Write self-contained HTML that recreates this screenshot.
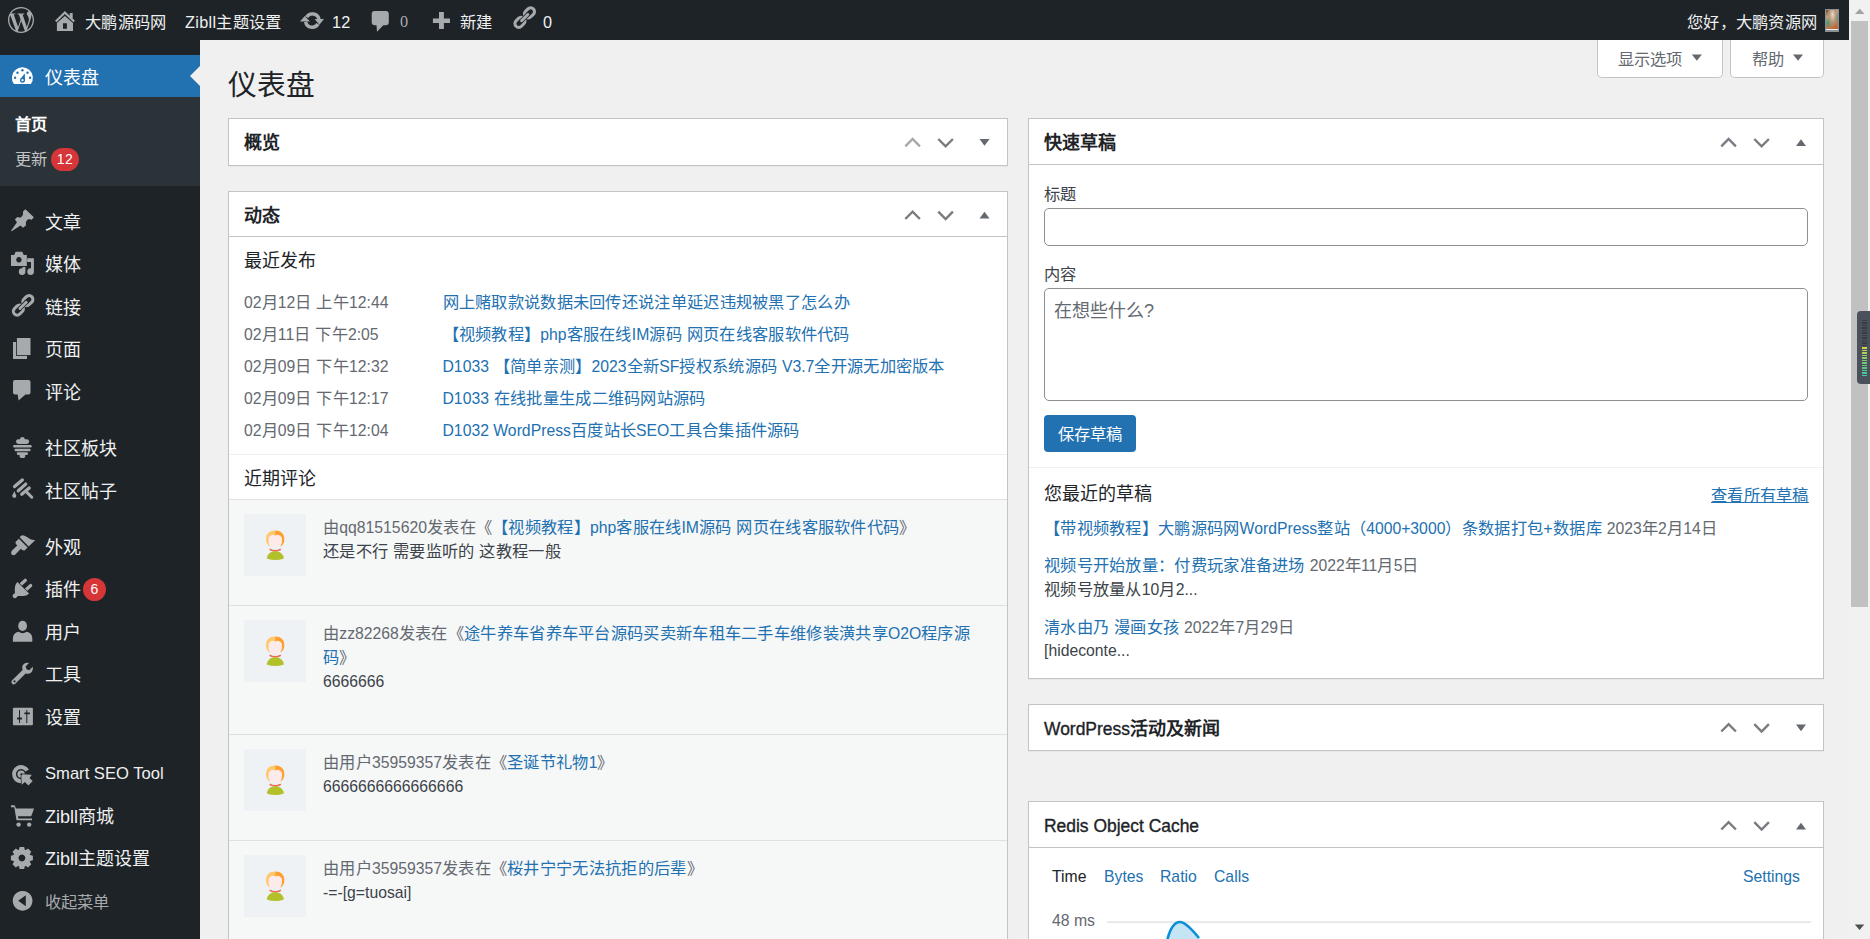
<!DOCTYPE html>
<html lang="zh-CN">
<head>
<meta charset="utf-8">
<style>
*{box-sizing:border-box;margin:0;padding:0}
html,body{width:1870px;height:939px;overflow:hidden;background:#f0f0f1}
body{font-family:"Liberation Sans",sans-serif;color:#3c434a;position:relative;text-spacing-trim:space-all}
.abs{position:absolute}
a{color:#2271b1;text-decoration:none}
svg{display:block}
/* admin bar */
#wpadminbar{position:absolute;left:0;top:0;width:1849px;height:40px;background:#1d2327;color:#f0f0f1;font-size:16.25px}
#wpadminbar .t{position:absolute;top:2px;line-height:40px;white-space:nowrap;letter-spacing:0.3px}
#wpadminbar .ic{position:absolute;fill:#a7aaad}
/* menu */
#adminmenuback{position:absolute;left:0;top:40px;width:200px;height:899px;background:#1d2327}
.mi{position:absolute;left:0;width:200px;height:42.5px;color:#f0f0f1;font-size:18px}
.mi .lb{position:absolute;left:45px;top:2px;line-height:42.5px;white-space:nowrap}
.mi svg{position:absolute;fill:#a7aaad}
.sub{font-size:16.25px;line-height:24px;white-space:nowrap;letter-spacing:0.4px}
.badge{display:inline-block;background:#d63638;color:#fff;border-radius:11.5px;font-size:14px;min-width:23px;height:23px;line-height:23px;padding:0 6px;text-align:center;vertical-align:middle;margin-left:-2px}
/* content */
h1{position:absolute;left:228px;top:65px;font-size:28.75px;font-weight:400;color:#1d2327;line-height:40px}
.tab{position:absolute;top:40px;height:38px;background:#fff;border:1px solid #c3c4c7;border-top:none;border-radius:0 0 5px 5px;color:#646970;font-size:16.25px;line-height:36px}
.postbox{position:absolute;background:#fff;border:1px solid #c3c4c7;box-shadow:0 1px 1px rgba(0,0,0,.04)}
.hdr{position:relative;height:46px;border-bottom:1px solid #c3c4c7}
.closed .hdr{border-bottom:none;height:45px}
.hdr h2{position:absolute;left:15px;top:1px;line-height:46px;font-size:18px;font-weight:700;color:#1d2327;white-space:nowrap}
.hdr .ctl{position:absolute;right:0;top:0;height:46px;width:110px}
.hdr svg{position:absolute}
.t175{font-size:18px;line-height:24px;white-space:nowrap}
.t1625{font-size:16.25px;letter-spacing:0.3px;line-height:24px;white-space:nowrap}
.rows .row{height:32px;line-height:24px;font-size:16.25px;letter-spacing:0.3px;white-space:nowrap;position:relative}
.rows .d{color:#646970;display:inline-block;width:198.5px}
.cm{left:0;width:778px;background:#f6f7f7;border-top:1px solid #e0e0e0}
.av{position:absolute;left:15px;width:62px;height:62px;background:#eef2f5}
.ct{position:absolute;left:94px;width:660px;font-size:16.25px;letter-spacing:0.3px;line-height:24px;color:#3c434a}
.ct .by{color:#646970}
.inp{border:1px solid #8c8f94;border-radius:5px;background:#fff}
.btn{background:#2271b1;color:#fff;border-radius:4px;font-size:16.25px;line-height:39px;text-align:center}
.L{font-size:0.97em;line-height:1;letter-spacing:0}
</style>
</head>
<body>
<!-- ADMIN BAR -->
<div id="wpadminbar">
  <svg class="ic" style="left:8px;top:7px" width="26" height="26" viewBox="0 0 24 24"><path d="M21.469 6.825c.84 1.537 1.318 3.3 1.318 5.175 0 3.979-2.156 7.456-5.363 9.325l3.295-9.527c.615-1.54.82-2.771.82-3.864 0-.405-.026-.78-.07-1.11m-7.981.105c.647-.03 1.232-.105 1.232-.105.582-.075.514-.93-.067-.899 0 0-1.755.135-2.88.135-1.064 0-2.85-.15-2.85-.15-.585-.03-.661.855-.075.885 0 0 .54.061 1.125.09l1.68 4.605-2.37 7.08L5.354 6.9c.649-.03 1.234-.1 1.234-.1.585-.075.516-.93-.065-.896 0 0-1.746.138-2.874.138-.2 0-.438-.008-.69-.015C4.911 3.15 8.235 1.215 12 1.215c2.809 0 5.365 1.072 7.286 2.833-.046-.003-.091-.009-.141-.009-1.06 0-1.812.923-1.812 1.914 0 .89.513 1.643 1.06 2.531.411.72.89 1.643.89 2.977 0 .915-.354 1.994-.821 3.479l-1.075 3.585-3.9-11.61zM12 22.784c-1.059 0-2.081-.153-3.048-.437l3.237-9.406 3.315 9.087q.036.078.078.149c-1.12.393-2.325.609-3.582.609M1.211 12c0-1.564.336-3.05.935-4.39L7.29 21.709A10.79 10.79 0 0 1 1.211 12M12 0C5.385 0 0 5.385 0 12s5.385 12 12 12 12-5.385 12-12S18.615 0 12 0"/></svg>
  <svg class="ic" style="left:50px;top:5px" width="30" height="30" viewBox="50 5 30 30"><path d="M55 20.7L64.9 10.9L69.8 15.7V13H72.7V18.6L74.9 20.7L73.4 22.3L64.9 14L56.5 22.3Z"/><path fill-rule="evenodd" d="M56.9 31V23L64.9 15.9L73 23V31ZM63 23.2V28.8H66.9V23.2Z"/></svg>
  <span class="t" style="left:85px">大鹏源码网</span>
  <span class="t" style="left:185px">Zibll主题设置</span>
  <svg class="ic" style="left:300px;top:11px" width="24" height="20" viewBox="0 0 24 20"><path d="M6.6 6.2A6.75 6.75 0 0 1 19.05 8.4" fill="none" stroke="#a7aaad" stroke-width="3.4"/><path d="M14.6 8H24L19.4 13.8Z"/><path d="M18.0 13.0A6.75 6.75 0 0 1 5.6 10.8" fill="none" stroke="#a7aaad" stroke-width="3.4"/><path d="M0 10.6H10L4.7 5Z"/></svg>
  <span class="t" style="left:332px">12</span>
  <svg class="ic" style="left:365px;top:5px" width="30" height="30" viewBox="365 5 30 30"><path d="M374.7 11H385.8A3 3 0 0 1 388.8 14V22.2A3 3 0 0 1 385.8 25.2H383.3L377 31.7L376.5 25.2H374.7A3 3 0 0 1 371.7 22.2V14A3 3 0 0 1 374.7 11Z"/></svg>
  <span class="t" style="left:400px;color:#a7aaad;font-family:'Liberation Serif',serif">0</span>
  <svg class="ic" style="left:425px;top:5px" width="30" height="30" viewBox="425 5 30 30"><path d="M439 12H443.9V18.5H450V23H443.9V29H439V23H432.9V18.5H439Z"/></svg>
  <span class="t" style="left:460px">新建</span>
  <svg class="ic" style="left:505px;top:2px" width="40" height="32" viewBox="505 2 40 32"><g transform="translate(524.7 17.6) rotate(-45) scale(0.97)"><rect x="-12.65" y="-3.95" width="11.5" height="7.9" rx="3.95" fill="none" stroke="#a7aaad" stroke-width="3.1"/><rect x="1.15" y="-3.95" width="11.5" height="7.9" rx="3.95" fill="none" stroke="#a7aaad" stroke-width="3.1"/><rect x="-6.9" y="-2.3" width="13.8" height="4.6" rx="2.3" fill="#1d2327"/><rect x="-6.1" y="-1.5" width="12.2" height="3" rx="1.5" fill="#a7aaad"/></g></svg>
  <span class="t" style="left:543px">0</span>
  <span class="t" style="left:1687px">您好，大鹏资源网</span>
  <div class="abs" style="left:1825px;top:9px;width:14px;height:23px;background:#8a8f94;padding:1px">
    <div style="width:12px;height:18.5px;background:radial-gradient(ellipse at 55% 25%,#e8d8c8 0%,#b89878 35%,transparent 60%),linear-gradient(150deg,#6b4a2e 0%,#c9a27a 30%,#4a9a84 50%,#b87a50 75%,#c25a28 100%)"></div><div style="width:12px;height:1.5px;background:#f0f0f0"></div>
  </div>
</div>

<!-- MENU -->
<div id="adminmenuback"></div>
<div id="menu">
  <div class="abs" style="left:0;top:55px;width:200px;height:42px;background:#2271b1"></div>
  <div class="abs" style="left:190px;top:66px;width:0;height:0;border-top:10px solid transparent;border-bottom:10px solid transparent;border-right:10px solid #f0f0f1"></div>
  <div class="abs" style="left:0;top:97px;width:200px;height:89px;background:#2c3338"></div>
  <div class="mi" style="top:55px;height:42px"><span class="lb" style="line-height:42px;color:#fff">仪表盘</span></div>
  <div class="abs sub" style="left:15px;top:112px;font-weight:700;color:#fff">首页</div>
  <div class="abs sub" style="left:15px;top:147px;color:#c3c4c7">更新 <span class="badge" style="position:relative;top:-1px">12</span></div>
  <div class="mi" style="top:199.75px"><span class="lb">文章</span></div>
  <div class="mi" style="top:242.25px"><span class="lb">媒体</span></div>
  <div class="mi" style="top:284.75px"><span class="lb">链接</span></div>
  <div class="mi" style="top:327.25px"><span class="lb">页面</span></div>
  <div class="mi" style="top:369.75px"><span class="lb">评论</span></div>
  <div class="mi" style="top:426px"><span class="lb">社区板块</span></div>
  <div class="mi" style="top:468.5px"><span class="lb">社区帖子</span></div>
  <div class="mi" style="top:524.75px"><span class="lb">外观</span></div>
  <div class="mi" style="top:567.25px"><span class="lb">插件 <span class="badge" style="position:relative;top:-2px;margin-left:-3px">6</span></span></div>
  <div class="mi" style="top:609.75px"><span class="lb">用户</span></div>
  <div class="mi" style="top:652.25px"><span class="lb">工具</span></div>
  <div class="mi" style="top:694.75px"><span class="lb">设置</span></div>
  <div class="mi" style="top:751px"><span class="lb" style="font-size:16.6px">Smart SEO Tool</span></div>
  <div class="mi" style="top:793.5px"><span class="lb">Zibll商城</span></div>
  <div class="mi" style="top:836px"><span class="lb">Zibll主题设置</span></div>
  <div class="mi" style="top:880px;font-size:16.25px;color:#a7aaad"><span class="lb" style="line-height:42px;top:1px">收起菜单</span></div>
  <svg class="abs" style="left:0;top:0" width="200" height="939" viewBox="0 0 200 939" fill="#a7aaad">
    <!-- dashboard -->
    <path fill="#fff" d="M13.93 84A10.5 10.5 0 1 1 30.87 84Z"/>
    <g fill="#2271b1"><circle cx="22.4" cy="70.2" r="1.2"/><circle cx="17.5" cy="72.8" r="1.2"/><circle cx="27.5" cy="72.8" r="1.2"/><circle cx="15.1" cy="77.7" r="1.2"/><circle cx="30.1" cy="77.7" r="1.2"/><path d="M24.8 73.2L25 80.2L20.2 79.2Z"/><circle cx="22.5" cy="80.2" r="2.5"/></g>
    <circle fill="#fff" cx="22.5" cy="80.2" r="1.1"/>
    <!-- pin -->
    <path d="M11.0 230.8L17.0 222.2L14.87 219.6L17.27 217L20.14 217.8Q22.5 216.5 23.02 214.5L23.02 211.4L25.41 209.2L33.88 217.3L31.64 219.7L28.77 219.1Q26.5 220 25.89 222.3L25.89 225.5L23.02 227.7L20.5 225.6L11.6 231.2Z"/>
    <!-- media -->
    <path fill-rule="evenodd" d="M11 254.9H14.2L15.6 251.8H22.3L23.7 254.9H26.85V265.9H11ZM18.9 257.1A2.7 2.7 0 1 0 18.91 257.1Z"/>
    <path d="M27.2 258.2H33.9V271.6A3.3 3.3 0 1 1 31 268.4V262H27.2Z"/>
    <path d="M22.5 266.9H25.4V271.6A3.3 3.3 0 1 1 22.5 268.4Z"/>
    <!-- links -->
    <g transform="translate(23.1 305.35) rotate(-45) scale(0.97)"><rect x="-12.65" y="-3.95" width="11.5" height="7.9" rx="3.95" fill="none" stroke="#a7aaad" stroke-width="3.1"/><rect x="1.15" y="-3.95" width="11.5" height="7.9" rx="3.95" fill="none" stroke="#a7aaad" stroke-width="3.1"/><rect x="-6.9" y="-2.3" width="13.8" height="4.6" rx="2.3" fill="#1d2327"/><rect x="-6.1" y="-1.5" width="12.2" height="3" rx="1.5" fill="#a7aaad"/></g>
    <!-- pages -->
    <path d="M13 342H27V359H13Z"/>
    <path fill="#1d2327" d="M16.1 337.2H31.3V355.9H16.1Z"/>
    <path d="M16.9 338H30.5V355.1H16.9Z"/>
    <!-- comments -->
    <path d="M15 380H28.5A2 2 0 0 1 30.5 382V392.4A2 2 0 0 1 28.5 394.4H25.5L18.5 400.6L17.7 394.4H15A2 2 0 0 1 13 392.4V382A2 2 0 0 1 15 380Z"/>
    <!-- community blocks -->
    <g stroke="#a7aaad" stroke-linecap="round">
      <path d="M18.3 441.6H26.8" stroke-width="4.6"/>
      <path d="M14.3 446.2H30.5" stroke-width="2.4"/>
      <path d="M15.7 450H29.4" stroke-width="2.4"/>
      <path d="M18.2 453.7H26.6" stroke-width="2.8"/>
      <path d="M14.3 494.5L17.9 491" stroke-width="0"/>
    </g>
    <circle cx="22.4" cy="439.3" r="2.4"/><ellipse cx="22.4" cy="456" rx="2.9" ry="2.1"/>
    <!-- community posts -->
    <g stroke="#a7aaad" stroke-linecap="round" stroke-width="3.3">
      <path d="M14.6 486.6L22.3 479.9"/>
      <path d="M18.3 490.8L25.7 484.1"/>
      <path d="M21.7 494.3L29.2 488"/>
      <path d="M27.2 492.6L31.8 497.2" stroke-width="3"/>
    </g>
    <path d="M14.3 491L16.4 495.8A2.1 2.1 0 1 1 12.2 495.8Z"/>
    <!-- appearance -->
    <path d="M19.7 537.3Q20.8 535.3 22.7 535.2Q25.2 535.4 27.6 537.6Q30.6 540 35.2 540.3L28.6 546.5Z"/>
    <path d="M18.9 538.8L27.6 547.5L24.8 550.3Q23.4 550.9 22 549.7L20.8 548.7L15.4 554.5Q13.4 556.1 11.6 554.5Q10.3 552.6 12 550.6L17.3 545.4L16.1 544.3Q15 543 15.7 541.8Z"/>
    <!-- plugins -->
    <g stroke="#a7aaad" stroke-linecap="round" stroke-width="3.2"><path d="M20.2 585L25.4 580.3"/><path d="M25.5 590.2L30.7 585.5"/></g>
    <path d="M17.4 582L29.1 593.5Q26.8 596 23 596L17.9 596L16.2 597.7A2.2 2.2 0 0 1 13.1 594.6L14.9 592.9Q14.6 589 15 586.5Q15.6 583.5 17.4 582Z" stroke="#1d2327" stroke-width="1.3" paint-order="stroke"/>
    <!-- users -->
    <ellipse cx="22.6" cy="625.9" rx="4.4" ry="5.1"/>
    <path d="M12.9 641.7V638Q13.5 632.6 18.5 631.8Q22.6 634.5 26.7 631.8Q31.7 632.6 32.3 638V641.7Z"/>
    <!-- tools -->
    <path d="M11.9 680.6L22.6 670Q21 665 25.4 663.1Q27.6 662.4 29 663L25.6 666.5L26.6 669.2L29.3 670.2L32.7 666.8Q33.3 668.4 32.4 670.8Q30.5 675 25.6 673.4L15 684Q13.5 685 11.9 683.5Q10.9 682 11.9 680.6ZM14.5 680.2A1.1 1.1 0 1 0 14.51 680.2Z" fill-rule="evenodd"/>
    <!-- settings -->
    <path fill-rule="evenodd" d="M13.9 707.7H31.9A1 1 0 0 1 32.9 708.7V724.3A1 1 0 0 1 31.9 725.3H13.9A1 1 0 0 1 12.9 724.3V708.7A1 1 0 0 1 13.9 707.7ZM19 710V717.6H17.1V719.6H19V723H20V719.6H22V717.6H20V710ZM26.3 710V712.4H24.4V714.2H26.3V723H27.3V714.2H29.9V712.4H27.3V710Z"/>
    <!-- smart seo -->
    <path d="M27.25 770.55A7.1 7.1 0 1 0 23.53 780.77" fill="none" stroke="#a7aaad" stroke-width="3.9"/>
    <circle cx="21.1" cy="774.1" r="3.7"/>
    <path d="M21.3 774.2L21.7 784.8L24.9 782.1L28.4 785.4L32.7 781.1L29.5 777.9L31.8 774.7Z" stroke="#1d2327" stroke-width="1.3" paint-order="stroke"/>
    <circle cx="21.3" cy="774.3" r="0.9" fill="#1d2327"/>
    <!-- cart -->
    <path d="M11 805.3H14.6L16 808.6H34.1L31.2 816.3H18L18.3 818.4H32V820.3H16.5L14.3 807.3H11Z"/>
    <circle cx="18.6" cy="824.6" r="2.2"/><circle cx="29.2" cy="824.6" r="2.2"/>
    <!-- cog -->
    <path fill-rule="evenodd" d="M19.00 849.70 L19.60 847.00 L24.20 847.00 L24.80 849.70 L25.72 850.08 L28.05 848.60 L31.30 851.85 L29.82 854.18 L30.20 855.10 L32.90 855.70 L32.90 860.30 L30.20 860.90 L29.82 861.82 L31.30 864.15 L28.05 867.40 L25.72 865.92 L24.80 866.30 L24.20 869.00 L19.60 869.00 L19.00 866.30 L18.08 865.92 L15.75 867.40 L12.50 864.15 L13.98 861.82 L13.60 860.90 L10.90 860.30 L10.90 855.70 L13.60 855.10 L13.98 854.18 L12.50 851.85 L15.75 848.60 L18.08 850.08ZM21.9 854.6A3.4 3.4 0 1 0 21.91 854.6Z"/>
    <!-- collapse -->
    <path fill-rule="evenodd" d="M22.6 890.9A9.9 9.9 0 1 1 22.59 890.9ZM25.8 895.3V906.3L18.2 900.8Z"/>
  </svg>
</div>

<!-- CONTENT -->
<h1>仪表盘</h1>
<div class="tab" style="left:1597px;width:126px"><span class="abs" style="left:20px;top:1px">显示选项</span></div>
<div class="tab" style="left:1730px;width:94px"><span class="abs" style="left:21px;top:1px">帮助</span></div>

<!-- LEFT COLUMN -->
<div class="postbox closed" style="left:228px;top:118px;width:780px;height:48px">
  <div class="hdr"><h2>概览</h2></div>
</div>
<div class="postbox" style="left:228px;top:191px;width:780px;height:760px">
  <div class="hdr" style="height:45px"><h2>动态</h2></div>
  <div class="abs t175" style="left:15px;top:57px;color:#1d2327">最近发布</div>
  <div class="abs rows" style="left:15px;top:98px">
    <div class="row"><span class="d"><span class="L">02</span>月<span class="L">12</span>日 上午<span class="L">12:44</span></span><a>网上赌取款说数据未回传还说注单延迟违规被黑了怎么办</a></div>
    <div class="row"><span class="d"><span class="L">02</span>月<span class="L">11</span>日 下午<span class="L">2:05</span></span><a>【视频教程】<span class="L">php</span>客服在线<span class="L">IM</span>源码 网页在线客服软件代码</a></div>
    <div class="row"><span class="d"><span class="L">02</span>月<span class="L">09</span>日 下午<span class="L">12:32</span></span><a><span class="L">D1033</span> 【简单亲测】<span class="L">2023</span>全新<span class="L">SF</span>授权系统源码 <span class="L">V3.7</span>全开源无加密版本</a></div>
    <div class="row"><span class="d"><span class="L">02</span>月<span class="L">09</span>日 下午<span class="L">12:17</span></span><a><span class="L">D1033</span> 在线批量生成二维码网站源码</a></div>
    <div class="row"><span class="d"><span class="L">02</span>月<span class="L">09</span>日 下午<span class="L">12:04</span></span><a><span class="L">D1032 WordPress</span>百度站长<span class="L">SEO</span>工具合集插件源码</a></div>
  </div>
  <div class="abs" style="left:0;top:262px;width:778px;height:1px;background:#f0f0f1"></div>
  <div class="abs t175" style="left:15px;top:275px;color:#1d2327">近期评论</div>
    <div class="abs cm" style="top:307px;height:106px">
    <div class="av" style="top:14px"><svg width="62" height="62" viewBox="244 514 62 62"><path d="M270 548.6Q275.2 551.6 280.4 548.6L281.2 550Q275.2 553.6 269.2 550Z" fill="#f06b4f"/><path d="M266.8 558.6Q267.6 551.6 275.3 551.2Q283.1 551.6 283.9 558.6Q275.3 561.6 266.8 558.6Z" fill="#b2c12a"/><ellipse cx="275.2" cy="540.5" rx="7" ry="7.6" fill="#fdeaea"/><path d="M275.2 535.5Q271 533 268.5 538Q268 543 270 546.7Q265.6 544 266 538.2Q267 530.4 275.2 530.6Z" fill="#ffc86b"/><path d="M275.2 535.5Q279.4 533 282 538Q282.4 543 280.4 546.7Q284.8 544 284.3 538.2Q283.4 530.4 275.2 530.6Z" fill="#ff9f2e"/></svg></div>
    <div class="ct" style="top:15px"><span class="by">由<span class="L">qq81515620</span>发表在《<a>【视频教程】<span class="L">php</span>客服在线<span class="L">IM</span>源码 网页在线客服软件代码</a>》</span><br>还是不行 需要监听的 这教程一般</div>
  </div>
  <div class="abs cm" style="top:413px;height:129px">
    <div class="av" style="top:14px"><svg width="62" height="62" viewBox="244 514 62 62"><path d="M270 548.6Q275.2 551.6 280.4 548.6L281.2 550Q275.2 553.6 269.2 550Z" fill="#f06b4f"/><path d="M266.8 558.6Q267.6 551.6 275.3 551.2Q283.1 551.6 283.9 558.6Q275.3 561.6 266.8 558.6Z" fill="#b2c12a"/><ellipse cx="275.2" cy="540.5" rx="7" ry="7.6" fill="#fdeaea"/><path d="M275.2 535.5Q271 533 268.5 538Q268 543 270 546.7Q265.6 544 266 538.2Q267 530.4 275.2 530.6Z" fill="#ffc86b"/><path d="M275.2 535.5Q279.4 533 282 538Q282.4 543 280.4 546.7Q284.8 544 284.3 538.2Q283.4 530.4 275.2 530.6Z" fill="#ff9f2e"/></svg></div>
    <div class="ct" style="top:15px"><span class="by">由<span class="L">zz82268</span>发表在《<a>途牛养车省养车平台源码买卖新车租车二手车维修装潢共享<span class="L">O2O</span>程序源码</a>》</span><br><span class="L">6666666</span></div>
  </div>
  <div class="abs cm" style="top:542px;height:106px">
    <div class="av" style="top:14px"><svg width="62" height="62" viewBox="244 514 62 62"><path d="M270 548.6Q275.2 551.6 280.4 548.6L281.2 550Q275.2 553.6 269.2 550Z" fill="#f06b4f"/><path d="M266.8 558.6Q267.6 551.6 275.3 551.2Q283.1 551.6 283.9 558.6Q275.3 561.6 266.8 558.6Z" fill="#b2c12a"/><ellipse cx="275.2" cy="540.5" rx="7" ry="7.6" fill="#fdeaea"/><path d="M275.2 535.5Q271 533 268.5 538Q268 543 270 546.7Q265.6 544 266 538.2Q267 530.4 275.2 530.6Z" fill="#ffc86b"/><path d="M275.2 535.5Q279.4 533 282 538Q282.4 543 280.4 546.7Q284.8 544 284.3 538.2Q283.4 530.4 275.2 530.6Z" fill="#ff9f2e"/></svg></div>
    <div class="ct" style="top:15px"><span class="by">由用户<span class="L">35959357</span>发表在《<a>圣诞节礼物<span class="L">1</span></a>》</span><br><span class="L">6666666666666666</span></div>
  </div>
  <div class="abs cm" style="top:648px;height:300px">
    <div class="av" style="top:14px"><svg width="62" height="62" viewBox="244 514 62 62"><path d="M270 548.6Q275.2 551.6 280.4 548.6L281.2 550Q275.2 553.6 269.2 550Z" fill="#f06b4f"/><path d="M266.8 558.6Q267.6 551.6 275.3 551.2Q283.1 551.6 283.9 558.6Q275.3 561.6 266.8 558.6Z" fill="#b2c12a"/><ellipse cx="275.2" cy="540.5" rx="7" ry="7.6" fill="#fdeaea"/><path d="M275.2 535.5Q271 533 268.5 538Q268 543 270 546.7Q265.6 544 266 538.2Q267 530.4 275.2 530.6Z" fill="#ffc86b"/><path d="M275.2 535.5Q279.4 533 282 538Q282.4 543 280.4 546.7Q284.8 544 284.3 538.2Q283.4 530.4 275.2 530.6Z" fill="#ff9f2e"/></svg></div>
    <div class="ct" style="top:15px"><span class="by">由用户<span class="L">35959357</span>发表在《<a>桜井宁宁无法抗拒的后辈</a>》</span><br><span class="L">-=-[g=tuosai]</span></div>
  </div>
</div>

<!-- RIGHT COLUMN -->
<div class="postbox" style="left:1028px;top:118px;width:796px;height:561px">
  <div class="hdr"><h2>快速草稿</h2></div>
  <div class="abs t1625" style="left:15px;top:63px">标题</div>
  <div class="abs inp" style="left:15px;top:89px;width:764px;height:38px"></div>
  <div class="abs t1625" style="left:15px;top:143px">内容</div>
  <div class="abs inp" style="left:15px;top:169px;width:764px;height:113px"></div>
  <div class="abs t175" style="left:25px;top:180px;color:#646970">在想些什么?</div>
  <div class="abs btn" style="left:15px;top:296px;width:92px;height:37px">保存草稿</div>
  <div class="abs" style="left:0;top:348px;width:794px;height:1px;background:#f0f0f1"></div>
  <div class="abs t175" style="left:15px;top:363px;color:#1d2327">您最近的草稿</div>
  <a class="abs t1625" style="left:682px;top:364px;text-decoration:underline">查看所有草稿</a>
  <div class="abs t1625" style="left:15px;top:397px"><a>【带视频教程】大鹏源码网<span class="L">WordPress</span>整站（<span class="L">4000+3000</span>）条数据打包+数据库</a> <span style="color:#646970"><span class="L">2023</span>年<span class="L">2</span>月<span class="L">14</span>日</span></div>
  <div class="abs t1625" style="left:15px;top:435px;line-height:23.5px"><a>视频号开始放量：付费玩家准备进场</a> <span style="color:#646970"><span class="L">2022</span>年<span class="L">11</span>月<span class="L">5</span>日</span><br>视频号放量从<span class="L">10</span>月<span class="L">2...</span></div>
  <div class="abs t1625" style="left:15px;top:497px;line-height:23px"><a>清水由乃 漫画女孩</a> <span style="color:#646970"><span class="L">2022</span>年<span class="L">7</span>月<span class="L">29</span>日</span><br><span class="L">[hideconte...</span></div>
</div>
<div class="postbox closed" style="left:1028px;top:704px;width:796px;height:47px">
  <div class="hdr"><h2><span class="L" style="font-weight:400;-webkit-text-stroke:0.35px #1d2327">WordPress</span>活动及新闻</h2></div>
</div>
<div class="postbox" style="left:1028px;top:801px;width:796px;height:200px">
  <div class="hdr"><h2 style="font-weight:400;-webkit-text-stroke:0.35px #1d2327"><span class="L">Redis Object Cache</span></h2></div>
  <div class="abs t1625" style="left:23px;top:61.5px;color:#1d2327"><span class="L">Time</span></div>
  <a class="abs t1625" style="left:75px;top:61.5px"><span class="L">Bytes</span></a>
  <a class="abs t1625" style="left:131px;top:61.5px"><span class="L">Ratio</span></a>
  <a class="abs t1625" style="left:185px;top:61.5px"><span class="L">Calls</span></a>
  <a class="abs t1625" style="left:714px;top:61.5px"><span class="L">Settings</span></a>
  <div class="abs" style="left:23px;top:108px;font-size:16.3px;line-height:20px;color:#646970"><span class="L">48 ms</span></div>
</div>

<!-- OVERLAY ICONS -->
<svg class="abs" style="left:0;top:0;pointer-events:none" width="1870" height="939" viewBox="0 0 1870 939">
  <g fill="none" stroke-width="2.4" stroke-linejoin="miter">
    <path d="M905.3 146.3L912.6 139L919.9 146.3" stroke="#a7aaad"/>
    <path d="M938.3 139L945.6 146.3L952.9 139" stroke="#787c82"/>
    <path d="M905.3 219L912.6 211.7L919.9 219" stroke="#787c82"/>
    <path d="M938.3 211.7L945.6 219L952.9 211.7" stroke="#787c82"/>
    <path d="M1721.3 146.3L1728.6 139L1735.9 146.3" stroke="#787c82"/>
    <path d="M1754.3 139L1761.6 146.3L1768.9 139" stroke="#787c82"/>
    <path d="M1721.3 731.5L1728.6 724.2L1735.9 731.5" stroke="#787c82"/>
    <path d="M1754.3 724.2L1761.6 731.5L1768.9 724.2" stroke="#787c82"/>
    <path d="M1721.3 829.5L1728.6 822.2L1735.9 829.5" stroke="#787c82"/>
    <path d="M1754.3 822.2L1761.6 829.5L1768.9 822.2" stroke="#787c82"/>
  </g>
  <g fill="#646970">
    <path d="M979.5 139H989.6L984.5 145.8Z"/>
    <path d="M979.5 218.5H989.6L984.5 211.7Z"/>
    <path d="M1796 146H1806L1801 139.2Z"/>
    <path d="M1796 724.5H1806L1801 731.3Z"/>
    <path d="M1796 829.5H1806L1801 822.7Z"/>
    <path d="M1691.8 54.5H1701.9L1696.85 60.8Z"/>
    <path d="M1793 54.5H1803L1798 60.8Z"/>
  </g>
  <path d="M1107 922.2H1811" stroke="#dcdcde" stroke-width="1.2"/>
  <path d="M1166 939Q1172 922 1180 922Q1186 922 1200 939Z" fill="#c5e4f6"/>
  <path d="M1167.5 939Q1172 922 1180 922Q1186 922 1199 938" fill="none" stroke="#0a8fd8" stroke-width="2.6"/>
</svg>

<!-- SCROLLBAR -->
<div class="abs" style="left:1849px;top:0;width:21px;height:939px;background:#f1f1f1"></div>
<div class="abs" style="left:1851px;top:21px;width:17px;height:586px;background:#c1c1c1"></div>
<svg class="abs" style="left:1849px;top:0" width="21" height="939" viewBox="1849 0 21 939"><path d="M1855 14H1864.5L1859.75 8.8Z" fill="#a3a3a3"/><path d="M1854.8 924.6H1864.3L1859.55 930Z" fill="#505050"/></svg>
<div class="abs" style="left:1857px;top:311px;width:16px;height:73px;background:#4b505a;border-radius:4px"></div>
<div class="abs eq" style="left:1862px;top:319.5px;width:5px"><div style="height:1.5px;margin-bottom:1px;background:#383d45"></div><div style="height:1.5px;margin-bottom:1px;background:#383d45"></div><div style="height:1.5px;margin-bottom:1px;background:#383d45"></div><div style="height:1.5px;margin-bottom:1px;background:#383d45"></div><div style="height:1.5px;margin-bottom:1px;background:#383d45"></div><div style="height:1.5px;margin-bottom:1px;background:#383d45"></div><div style="height:1.5px;margin-bottom:1px;background:#383d45"></div><div style="height:1.5px;margin-bottom:1px;background:#383d45"></div><div style="height:1.5px;margin-bottom:1px;background:#383d45"></div><div style="height:1.5px;margin-bottom:1px;background:#383d45"></div><div style="height:1.5px;margin-bottom:1px;background:#383d45"></div><div style="height:1.5px;margin-bottom:1px;background:#c9d84c"></div><div style="height:1.5px;margin-bottom:1px;background:#b8d455"></div><div style="height:1.5px;margin-bottom:1px;background:#a9d15c"></div><div style="height:1.5px;margin-bottom:1px;background:#9acf63"></div><div style="height:1.5px;margin-bottom:1px;background:#8ccc6a"></div><div style="height:1.5px;margin-bottom:1px;background:#7fca72"></div><div style="height:1.5px;margin-bottom:1px;background:#72c87a"></div><div style="height:1.5px;margin-bottom:1px;background:#66c783"></div><div style="height:1.5px;margin-bottom:1px;background:#5bc78d"></div><div style="height:1.5px;margin-bottom:1px;background:#51c896"></div><div style="height:1.5px;margin-bottom:1px;background:#48caa0"></div><div style="height:1.5px;margin-bottom:1px;background:#40cdaa"></div></div>
</body>
</html>
